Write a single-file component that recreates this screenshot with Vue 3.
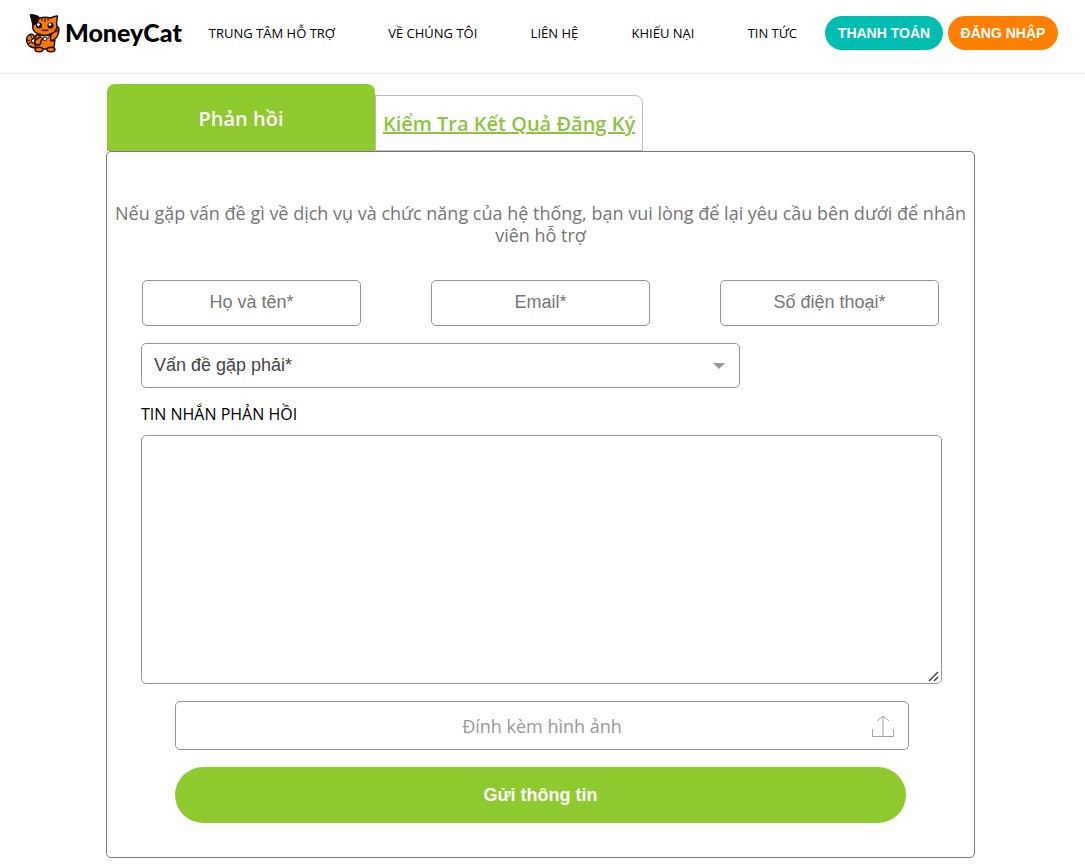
<script setup>
import { ref } from 'vue'

const links = ['TRUNG TÂM HỖ TRỢ', 'VỀ CHÚNG TÔI', 'LIÊN HỆ', 'KHIẾU NẠI', 'TIN TỨC']
const fields = [
  { id: 'name', type: 'text', label: 'Họ và tên*' },
  { id: 'email', type: 'email', label: 'Email*' },
  { id: 'phone', type: 'tel', label: 'Số điện thoại*' },
]
const values = ref({ name: '', email: '', phone: '' })
const message = ref('')
</script>

<template>
  <header class="header">
    <a class="logo" href="#">
      <svg class="cat" viewBox="0 0 36 40" aria-hidden="true">
        <g stroke="#160b02" stroke-width="1.4" stroke-linejoin="round" stroke-linecap="round">
          <path d="M11 35C4 35 1 30 1.500 26c.5-4 4-6 7-4 2 2 0 4-2 4.500-1 2 1 4 4 4z" fill="#f97808" />
          <path d="M11 22C9 27 10 32 11 36h17c2-4 2-9 1-14z" fill="#f97808" />
          <path d="M26 28c5-1 8-6 8-12 0-3-5-3-5.500 0 0 3-1 5-3 7z" fill="#f97808" />
          <path d="M9 9L5.500 2c4 0 7 1 9 3 3-1 8-1 11 0 2-1 4-2 7-2l-1 7c2 6-2 10-6 11-4 2-8 2-12 0C8 19 6 14 9 9z" fill="#f97808" />
          <path d="M5.500 2c4 0 7 1 8.500 3-1 4-3 6-6 7z" fill="#160b02" />
          <path d="M12 26c-3 1-3 6 1 6 3 0 3-3 3-4l2-3c-1-2-4-1-6 1z" fill="#f97808" />
          <ellipse cx="14" cy="36.500" rx="4" ry="2.300" fill="#f97808" />
          <ellipse cx="26" cy="36.500" rx="4" ry="2.300" fill="#f97808" />
        </g>
        <circle cx="14" cy="12.500" r="3" fill="#160b02" />
        <circle cx="25.500" cy="12.500" r="3" fill="#160b02" />
        <circle cx="13.400" cy="11.600" r="1.400" fill="#fff" />
        <circle cx="24.900" cy="11.600" r="1.400" fill="#fff" />
        <path d="M17 5v2.500M20 4.500v4M23 5v2.500M17 16.500c1 2 3 1 3 0 0 1 2 2 3 0M31 17v2M33 17v2M2 27l2.500.5M3 31l2-1.500M5 22l1.500 2M28 28l2-.5" fill="none" stroke="#160b02" stroke-width="1.100" stroke-linecap="round" />
        <path d="M14 22c3 1.500 8 1.500 11 0l-2 3h-6z" fill="#fff" stroke="#160b02" stroke-width=".8" />
        <circle cx="20" cy="26" r="1.800" fill="#fff" stroke="#160b02" stroke-width=".8" />
      </svg>
      <span>MoneyCat</span>
    </a>
    <nav class="nav">
      <a v-for="link in links" :key="link" href="#">{{ link }}</a>
    </nav>
    <div class="actions">
      <button type="button" class="pill pay">THANH TOÁN</button>
      <button type="button" class="pill login">ĐĂNG NHẬP</button>
    </div>
  </header>

  <main class="page">
    <div class="tabs">
      <button type="button" class="tab active">Phản hồi</button>
      <a class="tab other" href="#">Kiểm Tra Kết Quả Đăng Ký</a>
    </div>
    <section class="card">
      <p class="intro">Nếu gặp vấn đề gì về dịch vụ và chức năng của hệ thống, bạn vui lòng để lại yêu cầu bên dưới để nhân viên hỗ trợ</p>
      <form class="form" @submit.prevent>
        <div class="fields">
          <input
            v-for="f in fields"
            :key="f.id"
            v-model="values[f.id]"
            class="box field"
            :type="f.type"
            :placeholder="f.label"
            :aria-label="f.label"
          />
        </div>
        <div class="select-wrap">
          <select class="box select" aria-label="Vấn đề gặp phải">
            <option>Vấn đề gặp phải*</option>
          </select>
          <svg class="arrow" viewBox="0 0 12 6" aria-hidden="true"><path d="M0 0h12L6 6z" fill="#999" /></svg>
        </div>
        <label class="caption" for="message">TIN NHẮN PHẢN HỒI</label>
        <div class="message-wrap">
          <textarea id="message" v-model="message" class="box message"></textarea>
          <svg class="grip" viewBox="0 0 11 11" aria-hidden="true">
            <path d="M1 10l9-9M6 10l4-4" fill="none" stroke="#444" stroke-width="1.500" />
          </svg>
        </div>
        <label class="box upload">
          <input class="file" type="file" accept="image/*" />
          <span>Đính kèm hình ảnh</span>
          <svg class="upload-icon" viewBox="0 0 22 22" aria-hidden="true">
            <path d="M.5 14v7.500h21V14M11 21V1M5 6l6-5 6 5" fill="none" stroke="#a3a3a3" />
          </svg>
        </label>
        <button type="submit" class="submit">Gửi thông tin</button>
      </form>
    </section>
  </main>
</template>

<style>
body {
  margin: 0;
  background: #fff;
}
</style>

<style scoped>
* {
  box-sizing: border-box;
}
.header {
  display: flex;
  align-items: center;
  height: 74px;
  padding: 0 27px 8px 25px;
  border-bottom: 1px solid #e9e9e9;
  font-family: "Open Sans", sans-serif;
}
.logo {
  display: flex;
  align-items: center;
  gap: 4px;
  color: #000;
  font: 900 25px/32px Lato, sans-serif;
  text-decoration: none;
}
.logo span {
  padding-bottom: 2px;
}
.cat {
  width: 36px;
  height: 40px;
}
.nav {
  display: flex;
  flex: 1;
  justify-content: space-between;
  margin: 0 28px 0 27px;
}
.nav a {
  color: #000;
  font-size: 13px;
  font-weight: 500;
  line-height: 20px;
  text-decoration: none;
  white-space: nowrap;
}
.actions {
  display: flex;
  gap: 5px;
}
.pill {
  height: 34px;
  padding: 0 11px;
  border: 0;
  border-radius: 17px;
  color: #fff;
  font: bold 14px/20px "Liberation Sans", Arial, sans-serif;
  white-space: nowrap;
}
.pay {
  width: 118px;
  background: #00bdb2;
}
.login {
  width: 110px;
  background: #ff8000;
}
.page {
  padding: 10px 110px 9px 106px;
  font-family: "Open Sans", sans-serif;
}
.tabs {
  display: flex;
  align-items: flex-end;
  padding-left: 1px;
}
.tab {
  width: 268px;
  font: 600 20px/28px "Open Sans", sans-serif;
  text-align: center;
  white-space: nowrap;
}
.active {
  height: 67px;
  padding: 2px 6px 0;
  border: 0;
  border-radius: 8px 8px 0 0;
  background: #8fca2e;
  color: #fff;
}
.other {
  height: 56px;
  padding-top: 14px;
  border: 1px solid #bbb;
  border-radius: 0 8px 0 0;
  color: #8bc540;
}
.card {
  border: 1px solid #777;
  border-radius: 5px;
  padding-bottom: 34px;
}
.intro {
  margin: 0;
  padding: 50px 4px 34px;
  color: #757575;
  font-size: 18px;
  line-height: 22px;
  text-align: center;
}
.form {
  display: flex;
  flex-direction: column;
  padding: 0 32px 0 34px;
}
.box {
  border: 1px solid #949494;
  border-radius: 5px;
  background: #fff;
  font: 18px/22px "Liberation Sans", Arial, sans-serif;
}
.fields {
  display: grid;
  grid-template-columns: repeat(3, 1fr);
  gap: 70px;
  padding: 0 3px 0 1px;
}
.field {
  min-width: 0;
  height: 46px;
  padding: 0 8px 2px;
  text-align: center;
}
.field::placeholder {
  color: #757575;
}
.select-wrap {
  position: relative;
  width: calc(75% - 2px);
  margin-top: 17px;
}
.select {
  display: block;
  width: 100%;
  height: 45px;
  padding: 0 12px 2px;
  appearance: none;
  color: #444;
}
.arrow {
  position: absolute;
  right: 15px;
  top: 20px;
  width: 12px;
  height: 6px;
  pointer-events: none;
}
.caption {
  margin: 14px 0 9px;
  color: #000;
  font-size: 16px;
  font-weight: 500;
  line-height: 24px;
}
.message-wrap {
  position: relative;
}
.message {
  display: block;
  width: 100%;
  height: 249px;
  padding: 8px;
  resize: vertical;
}
.message::-webkit-resizer {
  background: transparent;
}
.grip {
  position: absolute;
  right: 3px;
  bottom: 2px;
  width: 11px;
  height: 11px;
  pointer-events: none;
}
.upload {
  position: relative;
  display: flex;
  align-items: center;
  justify-content: center;
  height: 49px;
  margin: 17px 33px 0 34px;
  color: #999;
  font-family: "Open Sans", sans-serif;
}
.file {
  position: absolute;
  inset: 0;
  width: 100%;
  opacity: 0;
}
.upload-icon {
  position: absolute;
  right: 14px;
  top: 13px;
  width: 22px;
  height: 22px;
}
.submit {
  height: 56px;
  margin: 17px 36px 0 34px;
  border: 0;
  border-radius: 28px;
  background: #8fca2e;
  color: #fff;
  font: bold 18px/22px "Liberation Sans", Arial, sans-serif;
}
</style>
